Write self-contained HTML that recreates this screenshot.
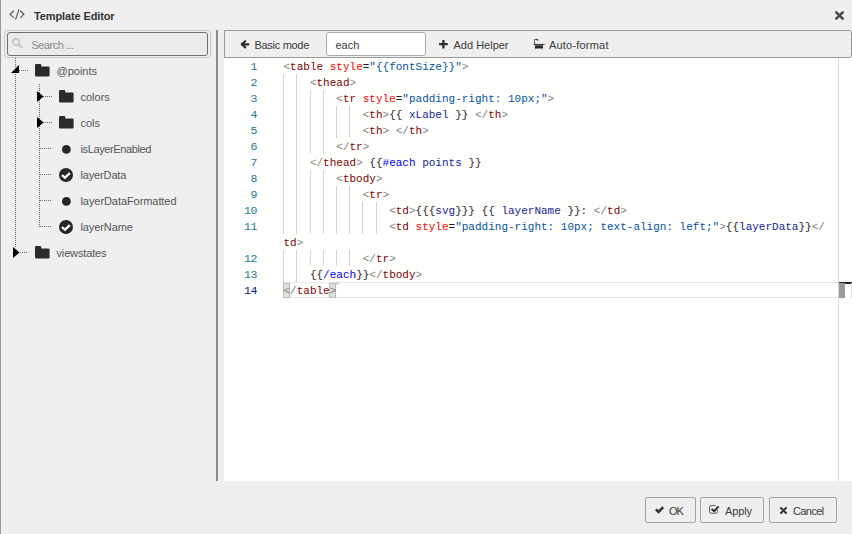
<!DOCTYPE html>
<html><head><meta charset="utf-8">
<style>
*{box-sizing:border-box;margin:0;padding:0}
html,body{width:852px;height:534px;overflow:hidden;background:#efefef;font-family:"Liberation Sans",sans-serif;font-size:11px;color:#3a3a3a}
.a{position:absolute}
.t{position:absolute;white-space:pre;line-height:16px}
svg{position:absolute;overflow:visible}
#lb{left:0;top:0;width:1px;height:534px;background:#999}
#title{left:34px;top:8px;font-weight:bold;color:#333;letter-spacing:-0.12px}
#srch-o{left:4px;top:30px;width:207px;height:28px;border:1px solid #c8c8c8;border-radius:3px}
#srch-i{left:7px;top:32px;width:201px;height:24px;border:1px solid #6f6f6f;border-radius:3px;background:#ebebeb}
#srch-t{left:31.5px;top:37px;color:#8a8a8a;letter-spacing:-0.5px}
#split{left:216px;top:30px;width:2px;height:451px;background:#8c8c8c}
#tb{left:224px;top:30px;width:628px;height:28px;border:1px solid #9a9a9a;border-radius:0 3px 3px 0;background:#efefef}
#inp{left:326px;top:32px;width:100px;height:24px;border:1px solid #aaa;border-radius:3px;background:#fff}
#ed{left:224px;top:58px;width:628px;height:423px;background:#fffffe}
#vr{left:838px;top:58px;width:1px;height:423px;background:#dadada}
.ln{position:absolute;left:224px;width:33.2px;text-align:right;font-family:"Liberation Mono",monospace;font-size:11.6px;letter-spacing:-0.36px;line-height:16px;color:#237893;white-space:pre}
.cl{position:absolute;left:283.5px;font-family:"Liberation Mono",monospace;font-size:11px;line-height:16px;color:#1e1e1e;white-space:pre}
.g{position:absolute;width:1px;background:#d3d3d3}
.d{color:#808080}.tg{color:#800000}.at{color:#ff0000}.vl{color:#0451a5}.kw{color:#0000ff}.vr{color:#13239a}
.btn{position:absolute;top:497px;height:26px;border:1px solid #a3a3a3;border-radius:2px;background:#efefef}
.tree{position:absolute;color:#555;line-height:16px}
.dv{position:absolute;width:1px;background-image:linear-gradient(#666 50%,transparent 50%);background-size:1px 2px}
.dh{position:absolute;height:1px;background-image:linear-gradient(90deg,#666 50%,transparent 50%);background-size:2px 1px}
</style></head><body>
<div class="a" id="lb"></div>
<!-- title -->
<svg style="left:0;top:0" width="30" height="30" viewBox="0 0 30 30"><path d="M13.9 10.6 L10.2 14.3 L13.9 18 M20.2 10.6 L23.9 14.3 L20.2 18 M19 9.4 L15.5 19.6" fill="none" stroke="#444" stroke-width="1.05"/></svg>
<div class="t" id="title">Template Editor</div>
<svg style="left:835px;top:11px" width="9" height="9" viewBox="0 0 9 9"><path d="M1.3 1.3 L7.7 7.7 M7.7 1.3 L1.3 7.7" stroke="#4a4a4a" stroke-width="2.6" stroke-linecap="round"/></svg>

<!-- search -->
<div class="a" id="srch-o"></div>
<div class="a" id="srch-i"></div>
<svg style="left:12px;top:38px" width="11" height="10" viewBox="0 0 11 10"><circle cx="4.2" cy="4" r="3.2" fill="none" stroke="#c4c4c4" stroke-width="1.5"/><path d="M6.6 6.4 L9.8 9.4" stroke="#c4c4c4" stroke-width="1.8" stroke-linecap="round"/></svg>
<div class="t" id="srch-t">Search ...</div>

<!-- tree -->
<div class="dv" style="left:15px;top:58px;height:189px"></div>
<div class="dv" style="left:39px;top:84px;height:143px"></div>
<div class="dh" style="left:19px;top:70px;width:9px"></div>
<div class="dh" style="left:43px;top:96px;width:9px"></div>
<div class="dh" style="left:43px;top:122px;width:9px"></div>
<div class="dh" style="left:40px;top:148px;width:12px"></div>
<div class="dh" style="left:40px;top:174px;width:12px"></div>
<div class="dh" style="left:40px;top:200px;width:12px"></div>
<div class="dh" style="left:40px;top:226px;width:12px"></div>
<div class="dh" style="left:20px;top:252px;width:8px"></div>
<svg style="left:11px;top:65px" width="8" height="8" viewBox="0 0 8 8"><path d="M0 8 L8 0 L8 8Z" fill="#000"/></svg>
<svg style="left:37px;top:91px" width="6.5" height="11" viewBox="0 0 6.5 11"><path d="M0 0 L6.5 5.5 L0 11Z" fill="#000"/></svg>
<svg style="left:37px;top:117px" width="6.5" height="11" viewBox="0 0 6.5 11"><path d="M0 0 L6.5 5.5 L0 11Z" fill="#000"/></svg>
<svg style="left:13px;top:247px" width="6.5" height="11" viewBox="0 0 6.5 11"><path d="M0 0 L6.5 5.5 L0 11Z" fill="#000"/></svg>
<!-- folders -->
<svg style="left:34.8px;top:64.2px" width="14.6" height="12.5" viewBox="0 0 14.6 12.5"><path d="M1.2 0 H5.1 Q6.3 0 6.3 1.2 V2.5 H13.4 Q14.6 2.5 14.6 3.7 V11.4 Q14.6 12.5 13.4 12.5 H1.2 Q0 12.5 0 11.4 V1.2 Q0 0 1.2 0Z" fill="#2b2b2b"/></svg>
<svg style="left:58.8px;top:90.2px" width="14.6" height="12.5" viewBox="0 0 14.6 12.5"><path d="M1.2 0 H5.1 Q6.3 0 6.3 1.2 V2.5 H13.4 Q14.6 2.5 14.6 3.7 V11.4 Q14.6 12.5 13.4 12.5 H1.2 Q0 12.5 0 11.4 V1.2 Q0 0 1.2 0Z" fill="#2b2b2b"/></svg>
<svg style="left:58.8px;top:116.2px" width="14.6" height="12.5" viewBox="0 0 14.6 12.5"><path d="M1.2 0 H5.1 Q6.3 0 6.3 1.2 V2.5 H13.4 Q14.6 2.5 14.6 3.7 V11.4 Q14.6 12.5 13.4 12.5 H1.2 Q0 12.5 0 11.4 V1.2 Q0 0 1.2 0Z" fill="#2b2b2b"/></svg>
<svg style="left:34.8px;top:246.2px" width="14.6" height="12.5" viewBox="0 0 14.6 12.5"><path d="M1.2 0 H5.1 Q6.3 0 6.3 1.2 V2.5 H13.4 Q14.6 2.5 14.6 3.7 V11.4 Q14.6 12.5 13.4 12.5 H1.2 Q0 12.5 0 11.4 V1.2 Q0 0 1.2 0Z" fill="#2b2b2b"/></svg>
<!-- dots / checks -->
<svg style="left:61.9px;top:144.8px" width="8.8" height="8.8" viewBox="0 0 8.8 8.8"><circle cx="4.4" cy="4.4" r="4.4" fill="#262626"/></svg>
<svg style="left:61.9px;top:196.8px" width="8.8" height="8.8" viewBox="0 0 8.8 8.8"><circle cx="4.4" cy="4.4" r="4.4" fill="#262626"/></svg>
<svg style="left:59.3px;top:168px" width="14" height="14" viewBox="0 0 14 14"><circle cx="7" cy="7" r="7" fill="#262626"/><path d="M2.9 7.1 L6 9.7 L10.8 5.2" fill="none" stroke="#fff" stroke-width="2.3"/></svg>
<svg style="left:59.3px;top:220px" width="14" height="14" viewBox="0 0 14 14"><circle cx="7" cy="7" r="7" fill="#262626"/><path d="M2.9 7.1 L6 9.7 L10.8 5.2" fill="none" stroke="#fff" stroke-width="2.3"/></svg>
<div class="tree" style="left:56.5px;top:63px">@points</div>
<div class="tree" style="left:80.5px;top:89px">colors</div>
<div class="tree" style="left:80.5px;top:115px">cols</div>
<div class="tree" style="left:80.5px;top:141px;letter-spacing:-0.38px">isLayerEnabled</div>
<div class="tree" style="left:80.5px;top:167px;letter-spacing:-0.15px">layerData</div>
<div class="tree" style="left:80.5px;top:193px;letter-spacing:-0.07px">layerDataFormatted</div>
<div class="tree" style="left:80.5px;top:219px;letter-spacing:-0.1px">layerName</div>
<div class="tree" style="left:56.5px;top:245px;letter-spacing:-0.15px">viewstates</div>

<div class="a" id="split"></div>

<!-- toolbar -->
<div class="a" id="tb"></div>
<svg style="left:230px;top:34px" width="20" height="20" viewBox="0 0 20 20"><path d="M15.2 7.2 L11.7 10.3 L15.2 13.4 M11.9 10.3 H18.4" fill="none" stroke="#2d2d2d" stroke-width="2.2" stroke-linecap="round" stroke-linejoin="round"/></svg>
<div class="t" style="left:254.5px;top:37px;letter-spacing:-0.3px">Basic mode</div>
<div class="a" id="inp"></div>
<div class="t" style="left:335.5px;top:37px">each</div>
<svg style="left:439px;top:39.6px" width="9" height="8.6" viewBox="0 0 9 8.6"><path d="M4.4 0 V8.6 M0.1 4.2 H8.7" stroke="#2d2d2d" stroke-width="2.3"/></svg>
<div class="t" style="left:453.5px;top:37px">Add Helper</div>
<svg style="left:530px;top:36px" width="18" height="16" viewBox="0 0 18 16"><path d="M4 3 H6.9 V3.8 H4.9 V8 H4Z" fill="#555"/><circle cx="7.3" cy="3.7" r="0.9" fill="#222"/><path d="M7.6 4.3 L9 5.6" stroke="#aaa" stroke-width="0.6"/><rect x="3.4" y="7.9" width="11.1" height="0.95" fill="#2a2a2a"/><path d="M4.9 9.3 H13 V11.8 Q13 12.6 12.2 12.6 H5.7 Q4.9 12.6 4.9 11.8Z" fill="#2a2a2a"/><rect x="5.2" y="12.4" width="0.7" height="0.9" fill="#444"/><rect x="12.3" y="12.4" width="0.7" height="0.9" fill="#444"/></svg>
<div class="t" style="left:549px;top:37px;letter-spacing:0.2px">Auto-format</div>

<!-- editor -->
<div class="a" id="ed"></div>
<div class="a" id="vr"></div>
<!-- active line -->
<div class="a" style="left:283px;top:282px;width:555px;height:16px;border-top:1px solid #e8e8e8;border-bottom:1px solid #e8e8e8"></div>
<div class="a" style="left:283px;top:282.5px;width:7px;height:15px;background:#dbe4db;border:1px solid #b9b9b9"></div>
<div class="a" style="left:329px;top:282.5px;width:7px;height:15px;background:#dbe4db;border:1px solid #b9b9b9"></div>
<svg style="left:335px;top:281px" width="5" height="5" viewBox="0 0 5 5"><circle cx="2.5" cy="2.5" r="1.1" fill="none" stroke="#aaa" stroke-width="0.8"/></svg>
<!-- overview ruler marker -->
<div class="a" style="left:839px;top:282px;width:13px;height:1.5px;background:#222"></div>
<div class="a" style="left:839px;top:283px;width:6px;height:15px;background:#9b9b9b"></div>
<div class="a" style="left:851px;top:283px;width:1px;height:15px;background:#dcdcdc"></div>

<!-- indent guides -->
<div class="g" style="left:283px;top:74px;height:160px"></div>
<div class="g" style="left:283px;top:250px;height:32px"></div>
<div class="g" style="left:296px;top:74px;height:160px"></div>
<div class="g" style="left:296px;top:250px;height:32px"></div>
<div class="g" style="left:310px;top:90px;height:64px"></div>
<div class="g" style="left:310px;top:170px;height:64px"></div>
<div class="g" style="left:310px;top:250px;height:16px"></div>
<div class="g" style="left:323px;top:90px;height:64px"></div>
<div class="g" style="left:323px;top:170px;height:64px"></div>
<div class="g" style="left:323px;top:250px;height:16px"></div>
<div class="g" style="left:336px;top:106px;height:32px"></div>
<div class="g" style="left:336px;top:186px;height:48px"></div>
<div class="g" style="left:336px;top:250px;height:16px"></div>
<div class="g" style="left:349px;top:106px;height:32px"></div>
<div class="g" style="left:349px;top:186px;height:48px"></div>
<div class="g" style="left:349px;top:250px;height:16px"></div>
<div class="g" style="left:362px;top:202px;height:32px"></div>
<div class="g" style="left:376px;top:202px;height:32px"></div>

<!-- line numbers -->
<div class="ln" style="top:59px">1</div>
<div class="ln" style="top:75px">2</div>
<div class="ln" style="top:91px">3</div>
<div class="ln" style="top:107px">4</div>
<div class="ln" style="top:123px">5</div>
<div class="ln" style="top:139px">6</div>
<div class="ln" style="top:155px">7</div>
<div class="ln" style="top:171px">8</div>
<div class="ln" style="top:187px">9</div>
<div class="ln" style="top:203px">10</div>
<div class="ln" style="top:219px">11</div>
<div class="ln" style="top:251px">12</div>
<div class="ln" style="top:267px">13</div>
<div class="ln" style="top:283px;color:#0b216f">14</div>

<div class="cl" style="top:59px"><span class="d">&lt;</span><span class="tg">table</span> <span class="at">style</span>=<span class="vl">"{{fontSize}}"</span><span class="d">&gt;</span></div>
<div class="cl" style="top:75px">    <span class="d">&lt;</span><span class="tg">thead</span><span class="d">&gt;</span></div>
<div class="cl" style="top:91px">        <span class="d">&lt;</span><span class="tg">tr</span> <span class="at">style</span>=<span class="vl">"padding-right: 10px;"</span><span class="d">&gt;</span></div>
<div class="cl" style="top:107px">            <span class="d">&lt;</span><span class="tg">th</span><span class="d">&gt;</span>{{ <span class="vr">xLabel</span> }} <span class="d">&lt;/</span><span class="tg">th</span><span class="d">&gt;</span></div>
<div class="cl" style="top:123px">            <span class="d">&lt;</span><span class="tg">th</span><span class="d">&gt;</span> <span class="d">&lt;/</span><span class="tg">th</span><span class="d">&gt;</span></div>
<div class="cl" style="top:139px">        <span class="d">&lt;/</span><span class="tg">tr</span><span class="d">&gt;</span></div>
<div class="cl" style="top:155px">    <span class="d">&lt;/</span><span class="tg">thead</span><span class="d">&gt;</span> {{<span class="kw">#each</span> <span class="vr">points</span> }}</div>
<div class="cl" style="top:171px">        <span class="d">&lt;</span><span class="tg">tbody</span><span class="d">&gt;</span></div>
<div class="cl" style="top:187px">            <span class="d">&lt;</span><span class="tg">tr</span><span class="d">&gt;</span></div>
<div class="cl" style="top:203px">                <span class="d">&lt;</span><span class="tg">td</span><span class="d">&gt;</span>{{{<span class="vr">svg</span>}}} {{ <span class="vr">layerName</span> }}: <span class="d">&lt;/</span><span class="tg">td</span><span class="d">&gt;</span></div>
<div class="cl" style="top:219px">                <span class="d">&lt;</span><span class="tg">td</span> <span class="at">style</span>=<span class="vl">"padding-right: 10px; text-align: left;"</span><span class="d">&gt;</span>{{<span class="vr">layerData</span>}}<span class="d">&lt;/</span></div>
<div class="cl" style="top:235px"><span class="tg">td</span><span class="d">&gt;</span></div>
<div class="cl" style="top:251px">            <span class="d">&lt;/</span><span class="tg">tr</span><span class="d">&gt;</span></div>
<div class="cl" style="top:267px">    {{<span class="kw">/each</span>}}<span class="d">&lt;/</span><span class="tg">tbody</span><span class="d">&gt;</span></div>
<div class="cl" style="top:283px"><span class="d">&lt;/</span><span class="tg">table</span><span class="d">&gt;</span></div>

<!-- buttons -->
<div class="btn" style="left:645px;width:51px"></div>
<svg style="left:650px;top:500px" width="20" height="20" viewBox="0 0 20 20"><path d="M5.9 9.3 L8.6 12 L13.1 7.2" fill="none" stroke="#333" stroke-width="2.6"/></svg>
<div class="t" style="left:669px;top:503px;letter-spacing:-1px">OK</div>
<div class="btn" style="left:700px;width:64px"></div>
<svg style="left:704px;top:500px" width="20" height="18" viewBox="0 0 20 18"><path d="M11.8 5.6 H7 Q5.6 5.6 5.6 7 V11.8 Q5.6 13.2 7 13.2 H12 Q13.4 13.2 13.4 11.8 V10" fill="none" stroke="#5a5a5a" stroke-width="1"/><path d="M7.5 8.9 L10.1 11.1 L14.7 6.4" fill="none" stroke="#2a2a2a" stroke-width="2"/></svg>
<div class="t" style="left:725px;top:503px;letter-spacing:-0.1px">Apply</div>
<div class="btn" style="left:769px;width:68px"></div>
<svg style="left:780px;top:507px" width="7" height="7" viewBox="0 0 7 7"><path d="M1 1 L6 6 M6 1 L1 6" stroke="#333" stroke-width="2" stroke-linecap="round"/></svg>
<div class="t" style="left:793px;top:503px;letter-spacing:-0.6px">Cancel</div>

</body></html>
